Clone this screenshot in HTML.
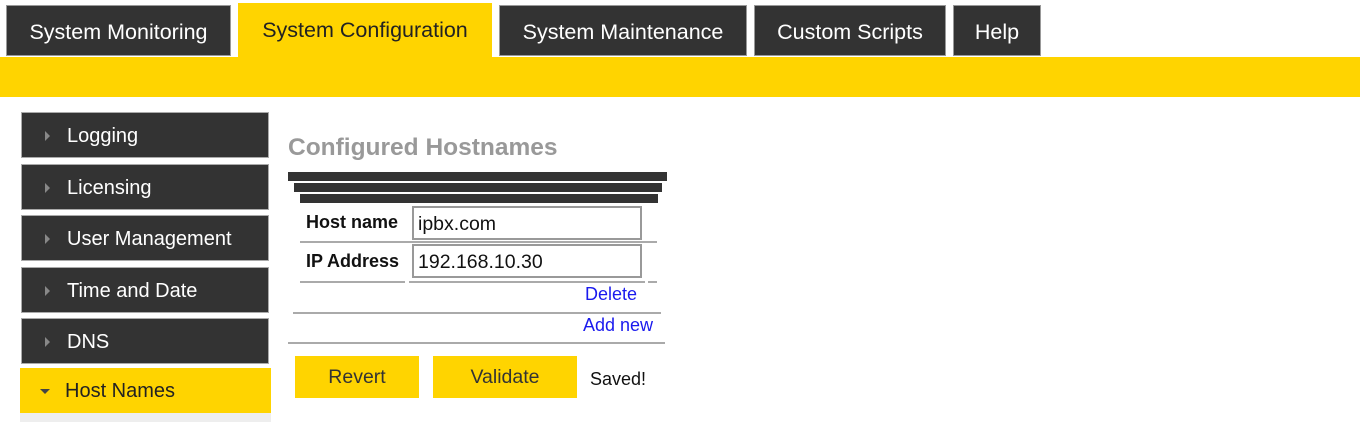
<!DOCTYPE html>
<html><head><style>
*{margin:0;padding:0;box-sizing:border-box}
body{width:1360px;height:422px;background:#fff;font-family:"Liberation Sans",Arial,sans-serif;position:relative;overflow:hidden}
.a{position:absolute}
.tab{position:absolute;top:5px;height:51px;background:#333;color:#fff;font-size:21.5px;line-height:53px;text-align:center;border:1px solid #999}
.side{position:absolute;left:21px;width:248px;height:46px;background:#333;color:#fff;font-size:20px;line-height:46px;padding-left:45px;border:1px solid #aaa}
.side:before{content:"";position:absolute;left:23px;top:18px;border-left:5px solid #888;border-top:5px solid transparent;border-bottom:5px solid transparent}
.bar{position:absolute;height:9px;background:#333}
.line{position:absolute;height:2px;background:#aaa}
.inp{position:absolute;left:412px;width:230px;height:34px;border:2px solid #999;font-size:19.5px;line-height:32px;padding-left:4px;color:#111}
.lbl{position:absolute;left:306px;font-size:18px;font-weight:bold;color:#111}
.btn{position:absolute;top:356px;height:42px;background:#ffd400;color:#333;font-size:19.5px;line-height:43px;text-align:center}
.lnk{position:absolute;color:#1a1aee;font-size:18px}
</style></head><body>
<div class="tab" style="left:6px;width:225px">System Monitoring</div>
<div class="tab" style="left:238px;top:3px;height:54px;width:254px;background:#ffd400;color:#222;border:none;line-height:54px">System Configuration</div>
<div class="tab" style="left:499px;width:248px">System Maintenance</div>
<div class="tab" style="left:754px;width:192px">Custom Scripts</div>
<div class="tab" style="left:953px;width:88px">Help</div>
<div class="a" style="left:0;top:57px;width:1360px;height:40px;background:#ffd400"></div>

<div class="side" style="top:112px">Logging</div>
<div class="side" style="top:164px">Licensing</div>
<div class="side" style="top:215px">User Management</div>
<div class="side" style="top:267px">Time and Date</div>
<div class="side" style="top:318px">DNS</div>
<div class="a" style="left:20px;top:368px;width:251px;height:45px;background:#ffd400;color:#222;font-size:20px;line-height:46px;padding-left:45px">Host Names</div>
<div class="a" style="left:40px;top:389px;border-top:5px solid #444;border-left:5px solid transparent;border-right:5px solid transparent"></div>
<div class="a" style="left:20px;top:413px;width:251px;height:9px;background:#eee"></div>

<div class="a" style="left:288px;top:134px;font-size:24.5px;font-weight:bold;color:#999">Configured Hostnames</div>
<div class="bar" style="left:288px;top:172px;width:379px"></div>
<div class="bar" style="left:294px;top:183px;width:368px"></div>
<div class="bar" style="left:300px;top:194px;width:358px"></div>
<div class="lbl" style="top:212px">Host name</div>
<div class="inp" style="top:206px">ipbx.com</div>
<div class="line" style="left:300px;top:241px;width:357px"></div>
<div class="lbl" style="top:251px">IP Address</div>
<div class="inp" style="top:244px">192.168.10.30</div>
<div class="line" style="left:300px;top:281px;width:105px"></div>
<div class="line" style="left:409px;top:281px;width:236px"></div>
<div class="line" style="left:648px;top:281px;width:9px"></div>
<div class="lnk" style="left:585px;top:284px">Delete</div>
<div class="line" style="left:293px;top:312px;width:368px"></div>
<div class="lnk" style="left:583px;top:315px">Add new</div>
<div class="line" style="left:288px;top:342px;width:377px"></div>
<div class="btn" style="left:295px;width:124px">Revert</div>
<div class="btn" style="left:433px;width:144px">Validate</div>
<div class="a" style="left:590px;top:369px;font-size:18px;color:#111">Saved!</div>
</body></html>
